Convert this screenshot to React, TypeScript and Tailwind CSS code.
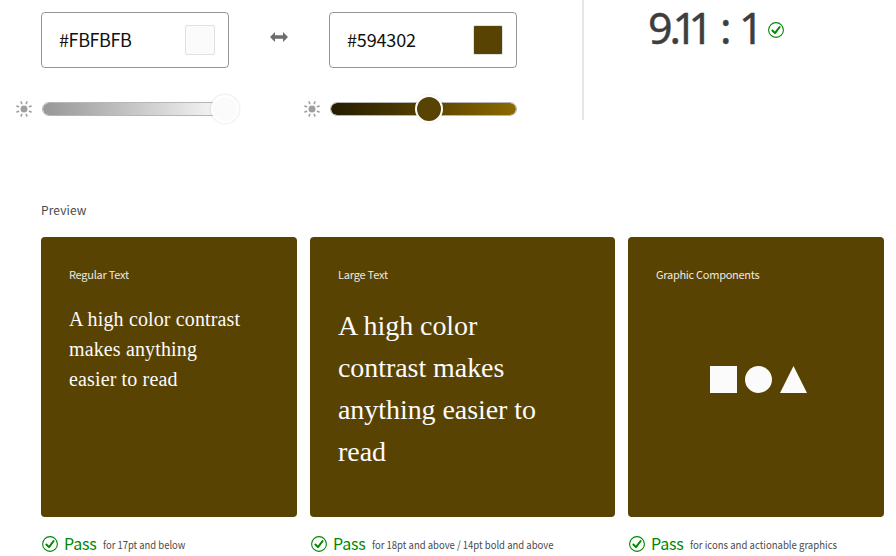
import type { ReactNode } from 'react';

const sans = "font-['Noto_Sans_CJK_SC','Noto_Sans',sans-serif]";
const serif = "font-['Liberation_Serif',serif]";

function CheckIcon() {
  return (
    <svg className="size-4 shrink-0" viewBox="0 0 16 16" fill="none" aria-hidden="true">
      <circle cx="8" cy="8" r="7.4" stroke="#008800" strokeWidth="1.1" />
      <path d="M4.4 8.5 7 11.1 11.6 5" stroke="#008800" strokeWidth="2" strokeLinejoin="round" strokeLinecap="round" />
    </svg>
  );
}

function SunIcon() {
  return (
    <svg className="size-4 shrink-0" viewBox="0 0 16 16" aria-hidden="true">
      <circle cx="8" cy="8" r="3.5" fill="#9f9f9f" />
      {[22.5, 67.5, 112.5, 157.5, 202.5, 247.5, 292.5, 337.5].map((angle) => (
        <path key={angle} d="M8 .3V2.2" stroke="#9f9f9f" strokeWidth="1.5" strokeLinecap="round" transform={`rotate(${angle} 8 8)`} />
      ))}
    </svg>
  );
}

function ColorField({ value, text, swatch }: { value: string; text: string; swatch: string }) {
  return (
    <div className="flex h-14 w-[188px] items-center justify-between rounded-[4px] border border-[#959595] pr-[13px] pl-[17px]">
      <span className={`pb-[2px] text-[18px] leading-6 text-[#111111] ${text}`}>{value}</span>
      <span className={`size-[30px] rounded-[2px] border border-[#e1e1e1] ${swatch}`} />
    </div>
  );
}

function Slider({ track, thumb }: { track: string; thumb: string }) {
  return (
    <div className="flex h-8 items-center">
      <SunIcon />
      <div className={`relative ml-[10px] h-[14px] w-[187px] rounded-full border border-[#b6b6b6] bg-clip-padding bg-origin-padding ${track}`}>
        <span className={`absolute rounded-full ${thumb}`} />
      </div>
    </div>
  );
}

function PreviewCard({ title, titleClass, width, note, noteClass, children }: {
  title: string; titleClass: string; width: string; note: string; noteClass: string; children: ReactNode;
}) {
  return (
    <section className={width}>
      <div className="h-[280px] rounded-[4px] bg-[#594302] px-7 pt-[28px] text-[#fbfbfb]">
        <h3 className={`h-[19px] text-[11px] leading-[18px] opacity-90 ${titleClass}`}>{title}</h3>
        {children}
      </div>
      <div className="mt-[17px] flex h-5 items-center whitespace-nowrap pl-px">
        <CheckIcon />
        <span className="ml-[6px] w-[33px] pb-[2px] text-[16px] leading-5 tracking-[-0.2px] text-[#008800]">Pass</span>
        <span className={`ml-[6px] origin-left text-[11px] leading-5 text-[#4b4b4b] ${noteClass}`}>{note}</span>
      </div>
    </section>
  );
}

export default function App() {
  return (
    <main className={`h-[556px] w-[896px] overflow-hidden bg-white ${sans}`}>
      <div className="flex h-[202px] items-start">
        <div className="ml-4 w-[224px] pt-3">
          <div className="ml-[25px]"><ColorField value="#FBFBFB" text="tracking-[-0.4px]" swatch="bg-[#fbfbfb]" /></div>
          <div className="mt-[25px]">
            <Slider track="bg-linear-to-r from-[#979797] to-[#fbfbfb]" thumb="-top-2 right-[-11px] size-7 border-2 border-white bg-[#fbfbfb] shadow-[0_0_2px_1px_rgba(0,0,0,0.08)]" />
          </div>
        </div>
        <svg className="mt-7 ml-[30px] h-[18px] w-[18px]" viewBox="0 0 18 18" aria-hidden="true">
          <path d="M0 9 5 4V7.3H13V4L18 9 13 14V10.7H5V14Z" fill="#6e6e6e" />
        </svg>
        <div className="ml-4 w-[214px] pt-3">
          <div className="ml-[25px]"><ColorField value="#594302" text="tracking-[-0.15px]" swatch="bg-[#594302]" /></div>
          <div className="mt-[25px]">
            <Slider track="bg-linear-to-r from-[#251c00] to-[#8d6a00]" thumb="-top-2 left-[84px] size-7 border-2 border-white bg-[#594302] shadow-[0_0_2px_1px_rgba(0,0,0,0.05)]" />
          </div>
        </div>
        <div className="ml-16 h-[120px] w-[2px] bg-[#e6e6e6]" />
        <div className="ml-[64px] flex h-[60px] items-center font-['Noto_Sans',sans-serif] text-[43px] leading-[52px] text-[#3e3e3e] [-webkit-text-stroke:0.4px_#3e3e3e]">
          <span className="w-[72px] pb-[4px] tracking-[-3.2px]">9<span className="tracking-[-8.5px]">.11</span></span>
          <span className="w-[19px] pb-[4px]">:</span>
          <span className="w-[29px] pb-[4px]">1</span>
          <CheckIcon />
        </div>
      </div>
      <div className="ml-[41px]">
        <h2 className="h-[35px] text-[12px] leading-4 tracking-[0.1px] text-[#4b4b4b]">Preview</h2>
        <div className="flex gap-[13px]">
          <PreviewCard title="Regular Text" titleClass="tracking-[-0.25px]" width="w-[256px]" note="for 17pt and below" noteClass="scale-x-[0.858]">
            <p className={`mt-[20px] text-[20px] leading-[30px] tracking-[0.14px] ${serif}`}>A high color contrast<br />makes anything<br />easier to read</p>
          </PreviewCard>
          <PreviewCard title="Large Text" titleClass="tracking-[-0.22px]" width="w-[305px]" note="for 18pt and above / 14pt bold and above" noteClass="scale-x-[0.864]">
            <p className={`mt-[21px] text-[28px] leading-[42px] tracking-[-0.06px] ${serif}`}>A high color<br />contrast makes<br />anything easier to<br />read</p>
          </PreviewCard>
          <PreviewCard title="Graphic Components" titleClass="tracking-[-0.28px]" width="w-[256px]" note="for icons and actionable graphics" noteClass="scale-x-[0.87]">
            <div className="mt-[82px] ml-[54px] flex gap-2">
              <div className="size-[27px] bg-[#fbfbfb]" />
              <div className="size-[27px] rounded-full bg-[#fbfbfb]" />
              <svg className="size-[27px]" viewBox="0 0 27 27" aria-hidden="true"><path d="M13.5 0 27 27H0Z" fill="#fbfbfb" /></svg>
            </div>
          </PreviewCard>
        </div>
      </div>
    </main>
  );
}
